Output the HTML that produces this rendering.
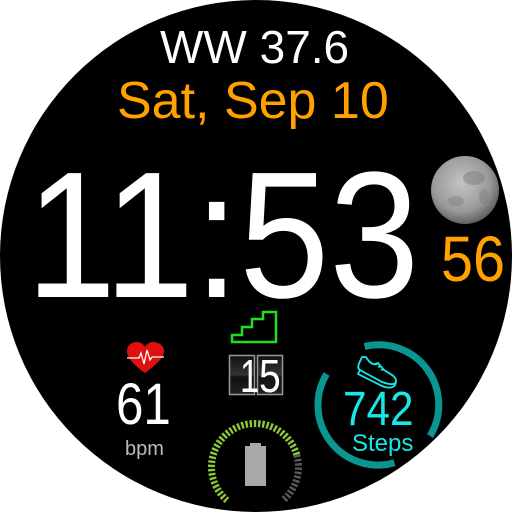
<!DOCTYPE html>
<html><head><meta charset="utf-8"><style>
html,body{margin:0;padding:0;background:#fff;}
body{width:512px;height:512px;position:relative;overflow:hidden;font-family:"Liberation Sans",sans-serif;}
.face{position:absolute;left:0;top:0;width:512px;height:512px;border-radius:50%;background:#000;}
.t{position:absolute;white-space:nowrap;line-height:1;}
</style></head><body>
<div class="face"></div>
<div class="t" style="left:160px;top:24px;font-size:46px;color:#fff;">WW 37.6</div>
<div class="t" style="left:117px;top:75px;font-size:52px;color:#ffa200;">Sat, Sep 10</div>
<div class="t" style="left:26px;top:146px;font-size:180px;color:#fff;transform:scaleX(0.9);transform-origin:0 0;">11:53</div>
<div class="t" style="left:441px;top:227px;font-size:64px;color:#ffa200;transform:scaleX(0.9);transform-origin:0 0;">56</div>
<div class="t" style="left:116px;top:376px;font-size:58px;color:#fff;transform:scaleX(0.85);transform-origin:0 0;">61</div>
<div class="t" style="left:125px;top:439px;font-size:20px;color:#bbb;">bpm</div>
<div class="t" style="left:343px;top:386px;font-size:48px;color:#19e6e6;transform:scaleX(0.88);transform-origin:0 0;">742</div>
<div class="t" style="left:352px;top:432px;font-size:24px;color:#19e6e6;">Steps</div>
<svg width="512" height="512" style="position:absolute;left:0;top:0">
<defs>
<radialGradient id="moon" cx="45%" cy="40%" r="60%">
<stop offset="0" stop-color="#c4c4c4"/><stop offset="0.7" stop-color="#999"/><stop offset="1" stop-color="#606060"/></radialGradient>
<linearGradient id="flip" x1="0" y1="0" x2="0" y2="1">
<stop offset="0" stop-color="#111"/><stop offset="0.5" stop-color="#333"/><stop offset="0.55" stop-color="#111"/><stop offset="1" stop-color="#222"/></linearGradient>
</defs>
<circle cx="465" cy="190" r="34" fill="url(#moon)"/>
<ellipse cx="474" cy="178" rx="11" ry="7" fill="#777" opacity="0.45"/>
<ellipse cx="456" cy="201" rx="8" ry="5" fill="#777" opacity="0.4"/>
<ellipse cx="484" cy="197" rx="5" ry="8" fill="#777" opacity="0.4"/>
<path d="M145,373 C130,362 127,356 127,351 C127,345 132,342 137,342 C141,342 144,345 145,347 C146,345 149,342 153,342 C158,342 164,345 164,351 C164,356 160,362 145,373Z" fill="#e01010"/>
<path d="M127,358 L139,358 L141,353 L144,364 L147,350 L150,360 L152,357 L164,357" fill="none" stroke="#fff" stroke-width="1.3"/>
<path d="M232,342 L232,335 L242,335 L242,327 L252,327 L252,319 L263,319 L263,312 L276,312 L276,342 Z" fill="none" stroke="#1ee01e" stroke-width="2.5" stroke-linejoin="miter"/>
<rect x="229.5" y="355.5" width="25" height="39" fill="url(#flip)" stroke="#999" stroke-width="1.5"/>
<rect x="257.5" y="355.5" width="25" height="39" fill="url(#flip)" stroke="#999" stroke-width="1.5"/>
<text x="240" y="392" font-family="Liberation Sans" font-size="46" fill="#fff" transform="translate(240 0) scale(0.75 1) translate(-240 0)">1</text>
<text x="259" y="392" font-family="Liberation Sans" font-size="46" fill="#fff" transform="translate(259 0) scale(0.85 1) translate(-259 0)">5</text>
<path d="M227,500.3 A43.5 43.5 0 1 1 296.8,455" fill="none" stroke="#8cc63c" stroke-width="7" stroke-dasharray="2.4 1.8"/>
<path d="M296.8,455 A43.5 43.5 0 0 1 283,500.3" fill="none" stroke="#5a5a5a" stroke-width="7" stroke-dasharray="2.4 1.8"/>
<rect x="250" y="443" width="11" height="4" fill="#a8a8a8"/>
<rect x="245" y="446" width="21" height="40" fill="#a8a8a8"/>
<path d="M364.5,346.5 A60 60 0 0 1 430,436" fill="none" stroke="#0a9590" stroke-width="7"/>
<path d="M394.5,462.7 A60 60 0 0 1 326.6,374" fill="none" stroke="#0a9590" stroke-width="7"/>
<path d="M362,357 C360,362 356,367 360,370 L382,382 C390,385 396,385 396,381 C396,376 390,374 384,370 L378,363 C375,366 370,364 366,357 Z M360,370 L358,374 L382,386 C390,389 396,388 396,381 M378,363 L375,364 M381,366 L378,367 M384,369 L381,370" fill="none" stroke="#19e6e6" stroke-width="1.8" stroke-linejoin="round"/>
</svg>
</body></html>
